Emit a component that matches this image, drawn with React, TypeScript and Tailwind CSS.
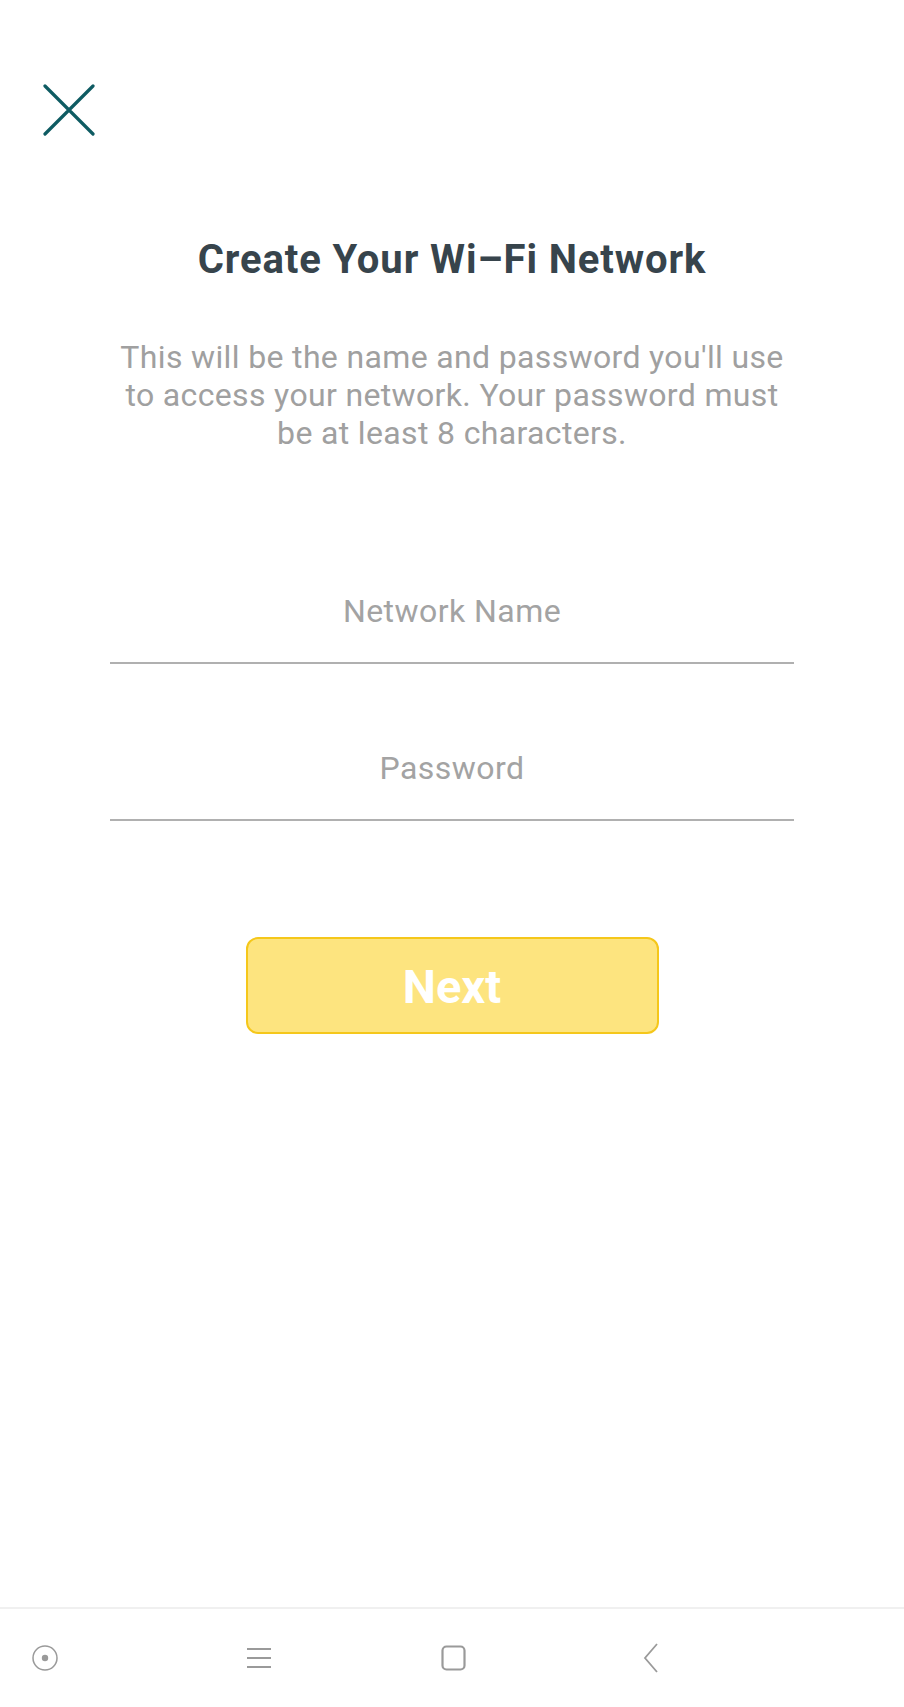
import { useState } from "react";

function CloseIcon() {
  return (
    <svg width="52" height="52" viewBox="0 0 52 52" fill="none">
      <path
        d="M2 2L50 50M50 2L2 50"
        stroke="#0e5b62"
        strokeWidth="3.2"
        strokeLinecap="round"
      />
    </svg>
  );
}

function NavBar() {
  return (
    <div className="flex h-[100px] items-center border-t-2 border-[#f0f0f0] bg-white">
      <svg className="ml-[32px]" width="26" height="26" viewBox="0 0 26 26" fill="none">
        <circle cx="13" cy="13" r="12" stroke="#9a9a9a" strokeWidth="1.5" />
        <circle cx="13" cy="13" r="3.2" fill="#9a9a9a" />
      </svg>
      <svg className="ml-[189px]" width="24" height="24" viewBox="0 0 24 24" fill="none">
        <path d="M0 3H24M0 12H24M0 21H24" stroke="#9a9a9a" strokeWidth="2" />
      </svg>
      <svg className="ml-[170px]" width="25" height="26" viewBox="0 0 25 26" fill="none">
        <rect x="1.5" y="1.5" width="22" height="23" rx="4" stroke="#9a9a9a" strokeWidth="2.2" />
      </svg>
      <svg className="ml-[177px]" width="16" height="30" viewBox="0 0 16 30" fill="none">
        <path d="M14 1L2 15L14 29" stroke="#9a9a9a" strokeWidth="1.8" />
      </svg>
    </div>
  );
}

function UnderlineInput({ placeholder, type = "text" }: { placeholder: string; type?: string }) {
  const [value, setValue] = useState("");
  return (
    <div className="mx-[110px] border-b-2 border-[#b0b0b0] pb-[33px]">
      <input
        type={type}
        value={value}
        onChange={(e) => setValue(e.target.value)}
        placeholder={placeholder}
        className="block h-[36px] w-full bg-transparent text-center text-[32px] leading-[36px] tracking-[0.45px] text-[#37444c] outline-none placeholder:text-[#a3a3a3]"
      />
    </div>
  );
}

export default function App() {
  return (
    <div className="flex h-[1707px] flex-col bg-white font-['Roboto',sans-serif]">
      <main className="flex flex-1 flex-col pt-[84px]">
        <button className="ml-[43px] w-[52px]">
          <CloseIcon />
        </button>

        <h1 className="mt-[102px] text-center text-[40px] leading-[44px] font-bold tracking-[0.9px] text-[#37444c]">
          Create Your Wi–Fi Network
        </h1>

        <p className="mx-auto mt-[56px] w-[680px] text-center text-[32px] leading-[38px] tracking-[0.35px] text-[#a0a0a0]">
          This will be the name and password you'll use to access your network. Your password must
          be at least 8 characters.
        </p>

        <div className="mt-[141px]">
          <UnderlineInput placeholder="Network Name" />
        </div>
        <div className="mt-[86px]">
          <UnderlineInput placeholder="Password" type="password" />
        </div>

        <button
          disabled
          className="mx-auto mt-[116px] flex h-[97px] w-[413px] items-center justify-center rounded-[12px] border-2 border-[#f5c71a] bg-[#fde47f] pt-[4px] text-[47px] font-bold text-white"
        >
          Next
        </button>
      </main>
      <NavBar />
    </div>
  );
}
